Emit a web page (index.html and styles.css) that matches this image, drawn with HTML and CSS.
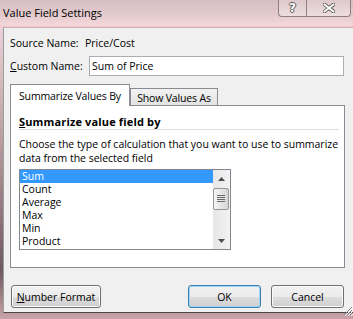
FILE: index.html
```html
<!DOCTYPE html>
<html>
<head>
  <meta charset="UTF-8">
  <title>Value Field Settings</title>
  <link rel="stylesheet" href="styles.css">
</head>
<body>

  <div class="window">
    <div class="titlebar">
      <span class="title">Value Field Settings</span>
      <div class="caption-buttons">
        <span class="caption-btn help">?</span>
        <span class="caption-btn close">
          <svg width="12" height="10" viewBox="0 0 12 10">
            <path d="M1.5 1.5 L10.5 8.5 M10.5 1.5 L1.5 8.5" stroke="#5a5a5a" stroke-width="3.6" stroke-linecap="square"/>
            <path d="M1.5 1.5 L10.5 8.5 M10.5 1.5 L1.5 8.5" stroke="#fff" stroke-width="1.8" stroke-linecap="square"/>
          </svg>
        </span>
      </div>
    </div>

    <div class="client">
      <div class="field-row">
        <span class="field-label">Source Name:</span>
        <span class="field-value">Price/Cost</span>
      </div>

      <div class="field-row custom">
        <label class="field-label" for="custom-name"><u>C</u>ustom Name:</label>
        <input class="textbox" id="custom-name" type="text" value="Sum of Price">
      </div>

      <div class="tabs">
        <div class="tab tab--active">Summarize Values By</div>
        <div class="tab">Show Values As</div>
      </div>

      <div class="panel">
        <div class="group-title"><u>S</u>ummarize value field by</div>
        <p class="desc">Choose the type of calculation that you want to use to summarize<br>data from the selected field</p>

        <div class="listbox">
          <ul class="listbox__items">
            <li class="listbox__item listbox__item--selected">Sum</li>
            <li class="listbox__item">Count</li>
            <li class="listbox__item">Average</li>
            <li class="listbox__item">Max</li>
            <li class="listbox__item">Min</li>
            <li class="listbox__item">Product</li>
          </ul>
          <div class="scrollbar">
            <div class="scrollbar__arrow">
              <svg width="7" height="4" viewBox="0 0 7 4"><path d="M3.5 0 L7 4 L0 4 Z" fill="#4d4d4d"/></svg>
            </div>
            <div class="scrollbar__thumb">
              <svg width="8" height="8" viewBox="0 0 8 8">
                <path d="M0 0.5 H8 M0 2.5 H8 M0 4.5 H8 M0 6.5 H8" stroke="#6a6a6a" stroke-width="1"/>
              </svg>
            </div>
            <div class="scrollbar__track"></div>
            <div class="scrollbar__arrow">
              <svg width="7" height="4" viewBox="0 0 7 4"><path d="M0 0 L7 0 L3.5 4 Z" fill="#4d4d4d"/></svg>
            </div>
          </div>
        </div>
      </div>

      <div class="buttons">
        <button class="btn btn--wide"><u>N</u>umber Format</button>
        <span class="buttons__spacer"></span>
        <button class="btn btn--default">OK</button>
        <button class="btn">Cancel</button>
      </div>
    </div>

    <svg class="grip" width="12" height="12" viewBox="0 0 12 12">
      <path d="M11 3 L3 11 M11 6 L6 11 M11 9 L9 11" stroke="#8a8a8a" stroke-width="1"/>
      <path d="M12 4 L4 12 M12 7 L7 12 M12 10 L10 12" stroke="#fff" stroke-width="1"/>
    </svg>
  </div>

</body>
</html>
```

FILE: styles.css
```css
body {
  margin: 0;
  font-family: 'Open Sans', 'Noto Sans', sans-serif;
  font-size: 10.5px;
  color: #000;
}

.window {
  position: relative;
  width: 353px;
  height: 319px;
  overflow: hidden;
  background: linear-gradient(to bottom, #d9bfc4 0, #ecd3d7 27px, #b89a9f 45%, #6e5a5d 85%, #c9a4aa 100%);
}

.titlebar {
  height: 27px;
  display: flex;
  justify-content: space-between;
  background: linear-gradient(to bottom, #d7bec2 0%, #e3cacd 55%, #f3d6da 90%, #f6c9cf 100%);
}

.title {
  padding: 5px 0 0 3px;
  line-height: 16px;
  font-size: 11px;
}

.caption-buttons {
  display: flex;
  height: 17px;
  margin-right: 2px;
}

.caption-btn {
  display: flex;
  align-items: center;
  justify-content: center;
  box-sizing: border-box;
  height: 17px;
  border: 1px solid #8f7d83;
  border-top: none;
  background: linear-gradient(to bottom, rgba(255, 255, 255, .15), rgba(255, 255, 255, .35));
}

.help {
  width: 28px;
  border-right: none;
  border-bottom-left-radius: 4px;
  color: #fff;
  font-family: 'DejaVu Sans', sans-serif;
  font-weight: bold;
  font-size: 12px;
  text-shadow: 1px 0 0 #5a5a5a, -1px 0 0 #5a5a5a, 0 1px 0 #5a5a5a, 0 -1px 0 #5a5a5a;
}

.close {
  width: 45px;
  border-bottom-right-radius: 4px;
}

.client {
  height: 286px;
  margin-left: 3px;
  padding: 7px 9px 0 6px;
  box-sizing: border-box;
  background: #f0f0f0;
  border-left: 1px solid #9c9c9c;
  border-top: 1px solid #c5b3b6;
  border-bottom: 1px solid #4f4446;
}

.field-row {
  display: flex;
  align-items: center;
  line-height: 16px;
}

.field-row.custom {
  margin-top: 5px;
  height: 20px;
}

.field-label {
  width: 75px;
  flex: none;
}

.custom .field-label {
  width: 79px;
}

.textbox {
  box-sizing: border-box;
  width: 259px;
  height: 20px;
  margin: 0;
  padding: 0 2px;
  border: 1px solid #abadb3;
  font: inherit;
  color: #000;
  background: #fff;
  outline: none;
}

.tabs {
  display: flex;
  align-items: flex-end;
  margin-top: 8px;
  height: 22px;
  margin-bottom: -1px;
  position: relative;
  z-index: 1;
}

.tab {
  box-sizing: border-box;
  height: 18px;
  width: 88px;
  display: flex;
  align-items: center;
  justify-content: center;
  border: 1px solid #898c95;
  border-left: none;
  background: linear-gradient(to bottom, #f2f2f2, #e3e3e3);
  padding-top: 1px;
  letter-spacing: -0.15px;
}

.tab--active {
  height: 22px;
  width: 120px;
  border-left: 1px solid #898c95;
  border-bottom: none;
  background: #fff;
  padding-top: 0;
}

.tab--active + .tab {
  border-left: 1px solid #898c95;
}

.panel {
  box-sizing: border-box;
  width: 335px;
  height: 163px;
  padding: 8px 5px 0 8px;
  background: #fff;
  border: 1px solid #898c95;
}

.group-title {
  font-weight: bold;
  font-size: 11px;
  letter-spacing: 0.15px;
  line-height: 15px;
  border-bottom: 1px solid #d5dfe5;
}

.desc {
  margin: 7px 0 0;
  line-height: 14px;
  white-space: nowrap;
  letter-spacing: -0.02px;
}

.listbox {
  display: flex;
  box-sizing: border-box;
  width: 212px;
  height: 81px;
  margin-top: 4px;
  border: 1px solid #828790;
  background: #fff;
}

.listbox__items {
  flex: 1;
  list-style: none;
  margin: 0;
  padding: 0;
}

.listbox__item {
  height: 13px;
  line-height: 13px;
  padding-left: 2px;
}

.listbox__item--selected {
  background: #3399ff;
  color: #fff;
}

.scrollbar {
  width: 17px;
  display: flex;
  flex-direction: column;
  background: linear-gradient(to right, #e6e6e6, #f3f3f3);
}

.scrollbar__arrow {
  height: 17px;
  display: flex;
  align-items: center;
  justify-content: center;
}

.scrollbar__thumb {
  box-sizing: border-box;
  height: 22px;
  margin: 1px 1px 0 0;
  display: flex;
  align-items: center;
  justify-content: center;
  border: 1px solid #979797;
  border-radius: 2px;
  background: linear-gradient(to right, #f4f4f4, #e3e3e3 60%, #d4d4d4);
}

.scrollbar__track {
  flex: 1;
}

.buttons {
  display: flex;
  margin-top: 17px;
  padding-left: 1px;
}

.buttons__spacer {
  flex: 1;
}

.btn {
  box-sizing: border-box;
  width: 73px;
  height: 23px;
  margin: 0;
  padding: 0;
  font: inherit;
  color: #000;
  border: 1px solid #707070;
  border-radius: 3px;
  background: linear-gradient(to bottom, #f2f2f2 0%, #ebebeb 50%, #dddddd 50%, #cfcfcf 100%);
  box-shadow: inset 0 0 0 1px #fbfbfb;
}

.btn--wide {
  width: 90px;
}

.btn--default {
  margin-right: 10px;
  border-color: #3c7fb1;
  box-shadow: inset 0 0 0 1px #9bd5f3;
}

.grip {
  position: absolute;
  right: 0;
  bottom: 3px;
}
```
